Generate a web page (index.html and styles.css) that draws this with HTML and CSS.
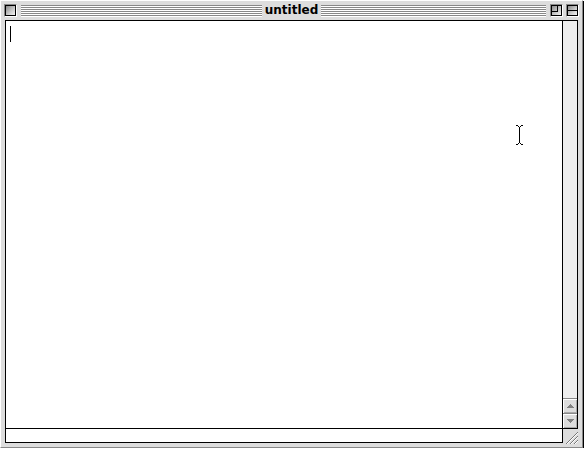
FILE: index.html
```html
<!DOCTYPE html>
<html>
<head>
<meta charset="utf-8">
<title>untitled</title>
<link rel="stylesheet" href="styles.css">
</head>
<body>
<div class="window">
  <div class="titlebar">
    <div class="side left">
      <div class="wbox close"><span class="face"></span></div>
      <div class="stripes"></div>
    </div>
    <div class="title">untitled</div>
    <div class="side right">
      <div class="stripes"></div>
      <div class="wbox zoom"><span class="face"><span class="mini"></span></span></div>
      <div class="wbox collapse"><span class="face"><span class="half"></span><span class="half"></span></span></div>
    </div>
  </div>
  <div class="content">
    <div class="textarea"><span class="caret"></span></div>
    <div class="vscroll">
      <div class="track"></div>
      <div class="arrow">
        <svg width="7" height="4" viewBox="0 0 7 4" shape-rendering="crispEdges"><path d="M3 0h1v1h1v1h1v1h1v1H0V3h1V2h1V1h1z" fill="#808080"/></svg>
      </div>
      <div class="arrow">
        <svg width="7" height="4" viewBox="0 0 7 4" shape-rendering="crispEdges"><path d="M0 0h7v1H6v1H5v1H4v1H3V3H2V2H1V1H0z" fill="#808080"/></svg>
      </div>
    </div>
    <div class="hbar"></div>
    <div class="corner"></div>
  </div>
  <div class="grow">
    <svg width="12" height="12" viewBox="0 0 12 12" shape-rendering="crispEdges">
      <g fill="#777">
        <rect x="0" y="11" width="1" height="1"/><rect x="1" y="10" width="1" height="1"/><rect x="2" y="9" width="1" height="1"/><rect x="3" y="8" width="1" height="1"/><rect x="4" y="7" width="1" height="1"/><rect x="5" y="6" width="1" height="1"/><rect x="6" y="5" width="1" height="1"/><rect x="7" y="4" width="1" height="1"/><rect x="8" y="3" width="1" height="1"/><rect x="9" y="2" width="1" height="1"/><rect x="10" y="1" width="1" height="1"/><rect x="11" y="0" width="1" height="1"/>
        <rect x="4" y="11" width="1" height="1"/><rect x="5" y="10" width="1" height="1"/><rect x="6" y="9" width="1" height="1"/><rect x="7" y="8" width="1" height="1"/><rect x="8" y="7" width="1" height="1"/><rect x="9" y="6" width="1" height="1"/><rect x="10" y="5" width="1" height="1"/><rect x="11" y="4" width="1" height="1"/>
        <rect x="8" y="11" width="1" height="1"/><rect x="9" y="10" width="1" height="1"/><rect x="10" y="9" width="1" height="1"/><rect x="11" y="8" width="1" height="1"/>
      </g>
      <g fill="#fff">
        <rect x="1" y="11" width="1" height="1"/><rect x="2" y="10" width="1" height="1"/><rect x="3" y="9" width="1" height="1"/><rect x="4" y="8" width="1" height="1"/><rect x="5" y="7" width="1" height="1"/><rect x="6" y="6" width="1" height="1"/><rect x="7" y="5" width="1" height="1"/><rect x="8" y="4" width="1" height="1"/><rect x="9" y="3" width="1" height="1"/><rect x="10" y="2" width="1" height="1"/><rect x="11" y="1" width="1" height="1"/>
        <rect x="5" y="11" width="1" height="1"/><rect x="6" y="10" width="1" height="1"/><rect x="7" y="9" width="1" height="1"/><rect x="8" y="8" width="1" height="1"/><rect x="9" y="7" width="1" height="1"/><rect x="10" y="6" width="1" height="1"/><rect x="11" y="5" width="1" height="1"/>
        <rect x="9" y="11" width="1" height="1"/><rect x="10" y="10" width="1" height="1"/><rect x="11" y="9" width="1" height="1"/>
      </g>
    </svg>
  </div>
  <svg class="ibeam" width="7" height="20" viewBox="0 0 7 20" shape-rendering="crispEdges">
    <path d="M0 0h2v1H0zM5 0h2v1H5zM2 1h1v1H2zM4 1h1v1H4zM3 2h1v16H3zM2 18h1v1H2zM4 18h1v1H4zM0 19h2v1H0zM5 19h2v1H5z" fill="#000"/>
  </svg>
</div>
</body>
</html>
```

FILE: styles.css
```css
html, body {
  margin: 0;
  padding: 0;
  background: #fff;
}

.window {
  position: relative;
  box-sizing: border-box;
  width: 583px;
  height: 448px;
  background: #dddddd;
  border-top: 1px solid #fff;
  border-left: 1px solid #fff;
  border-right: 1px solid #888;
  border-bottom: 1px solid #888;
  box-shadow: 1px 1px 0 #000;
  padding: 0 4px 4px 4px;
  display: flex;
  flex-direction: column;
}

.titlebar {
  height: 19px;
  margin: 0 -4px;
  padding: 0 3px;
  display: grid;
  grid-template-columns: 1fr auto 1fr;
  align-items: center;
}

.side {
  display: flex;
  align-items: center;
}

.stripes {
  flex: 1;
  height: 12px;
  background: repeating-linear-gradient(to bottom, #888 0, #888 1px, #fff 1px, #fff 2px);
}

.side.left .stripes { margin-left: 4px; }
.side.right .wbox { margin-left: 4px; }
.side.right .wbox.collapse { margin-left: 3px; }

.title {
  font-family: "DejaVu Sans", "Liberation Sans", sans-serif;
  font-weight: bold;
  font-size: 12px;
  line-height: 19px;
  color: #000;
  padding: 0 3px;
}

.wbox {
  box-sizing: border-box;
  width: 13px;
  height: 13px;
  border-top: 1px solid #888;
  border-left: 1px solid #888;
  border-right: 1px solid #fff;
  border-bottom: 1px solid #fff;
  display: flex;
}

.face {
  box-sizing: border-box;
  width: 11px;
  height: 11px;
  border: 1px solid #000;
  background: linear-gradient(135deg, #8a8a8a 0%, #c8c8c8 55%, #f4f4f4 100%);
  position: relative;
  display: flex;
  flex-direction: column;
}

.zoom .face .mini {
  box-sizing: border-box;
  width: 6px;
  height: 6px;
  border-right: 1px solid #000;
  border-bottom: 1px solid #000;
}

.collapse .face .half {
  flex: 1;
}

.collapse .face .half:first-child {
  border-bottom: 1px solid #000;
}

.content {
  flex: 1;
  border: 1px solid #000;
  background: #fff;
  display: grid;
  grid-template-columns: 1fr 15px;
  grid-template-rows: 1fr 14px;
}

.textarea {
  padding: 5px 0 0 4px;
}

.caret {
  display: block;
  width: 1px;
  height: 16px;
  background: #000;
}

.vscroll {
  border-left: 1px solid #000;
  display: flex;
  flex-direction: column;
}

.track {
  flex: 1;
  background: #eeeeee;
}

.arrow {
  height: 14px;
  border-top: 1px solid #888;
  background: #dddddd;
  box-shadow: inset 1px 1px 0 #fff, inset -1px -1px 0 #aaa;
  display: flex;
  align-items: center;
  justify-content: center;
}

.hbar {
  border-top: 1px solid #000;
  background: #fff;
}

.corner {
  border-top: 1px solid #000;
  border-left: 1px solid #000;
  background: #dddddd;
}

.grow {
  position: absolute;
  left: 562px;
  top: 428px;
  width: 19px;
  height: 18px;
  background: #dddddd;
  display: flex;
  align-items: flex-end;
  justify-content: flex-end;
  padding: 0 4px 3px 0;
  box-sizing: border-box;
}

.ibeam {
  position: absolute;
  left: 515px;
  top: 124px;
}
```
